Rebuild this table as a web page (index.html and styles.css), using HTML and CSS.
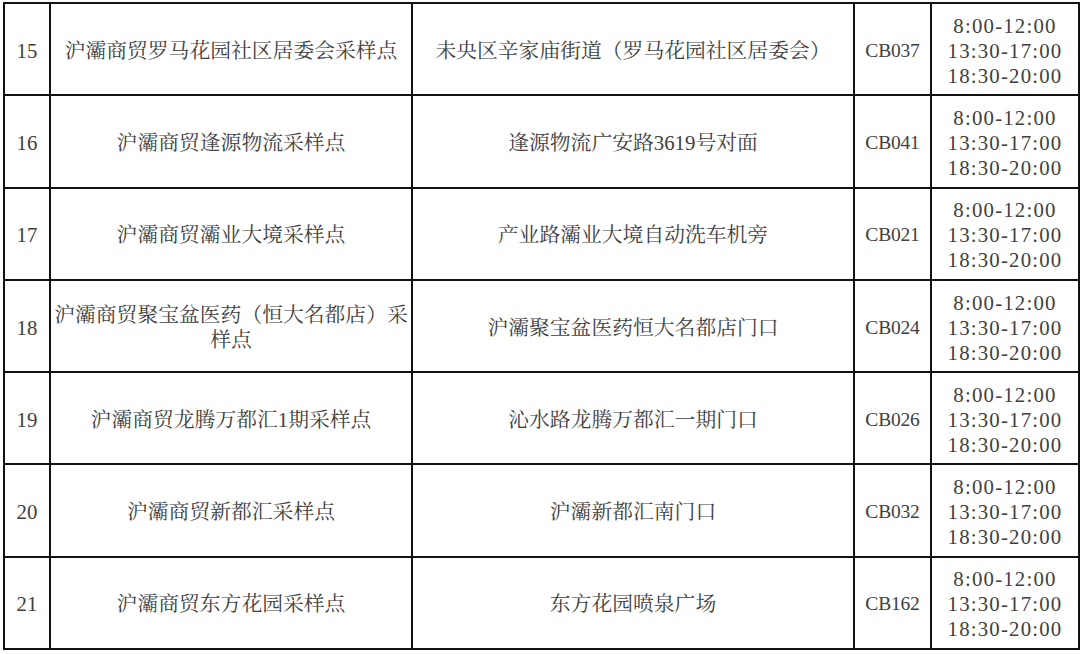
FILE: index.html
```html
<!DOCTYPE html>
<html lang="zh-CN">
<head>
<meta charset="utf-8">
<link rel="stylesheet" href="styles.css">
</head>
<body>
<table class="sites">
  <colgroup>
    <col class="c-no"><col class="c-name"><col class="c-addr"><col class="c-code"><col class="c-time">
  </colgroup>
  <tbody>
    <tr>
      <td class="no">15</td>
      <td class="name">沪灞商贸罗马花园社区居委会采样点</td>
      <td class="addr">未央区辛家庙街道（罗马花园社区居委会）</td>
      <td class="code">CB037</td>
      <td class="time">8:00-12:00<br>13:30-17:00<br>18:30-20:00</td>
    </tr>
    <tr>
      <td class="no">16</td>
      <td class="name">沪灞商贸逢源物流采样点</td>
      <td class="addr">逢源物流广安路3619号对面</td>
      <td class="code">CB041</td>
      <td class="time">8:00-12:00<br>13:30-17:00<br>18:30-20:00</td>
    </tr>
    <tr>
      <td class="no">17</td>
      <td class="name">沪灞商贸灞业大境采样点</td>
      <td class="addr">产业路灞业大境自动洗车机旁</td>
      <td class="code">CB021</td>
      <td class="time">8:00-12:00<br>13:30-17:00<br>18:30-20:00</td>
    </tr>
    <tr>
      <td class="no">18</td>
      <td class="name">沪灞商贸聚宝盆医药（恒大名都店）采样点</td>
      <td class="addr">沪灞聚宝盆医药恒大名都店门口</td>
      <td class="code">CB024</td>
      <td class="time">8:00-12:00<br>13:30-17:00<br>18:30-20:00</td>
    </tr>
    <tr>
      <td class="no">19</td>
      <td class="name">沪灞商贸龙腾万都汇1期采样点</td>
      <td class="addr">沁水路龙腾万都汇一期门口</td>
      <td class="code">CB026</td>
      <td class="time">8:00-12:00<br>13:30-17:00<br>18:30-20:00</td>
    </tr>
    <tr>
      <td class="no">20</td>
      <td class="name">沪灞商贸新都汇采样点</td>
      <td class="addr">沪灞新都汇南门口</td>
      <td class="code">CB032</td>
      <td class="time">8:00-12:00<br>13:30-17:00<br>18:30-20:00</td>
    </tr>
    <tr>
      <td class="no">21</td>
      <td class="name">沪灞商贸东方花园采样点</td>
      <td class="addr">东方花园喷泉广场</td>
      <td class="code">CB162</td>
      <td class="time">8:00-12:00<br>13:30-17:00<br>18:30-20:00</td>
    </tr>
  </tbody>
</table>
</body>
</html>
```

FILE: styles.css
```css
html, body {
  margin: 0;
  padding: 0;
  background: #ffffff;
}

body {
  padding: 2px 0 0 3px;
}

.sites {
  border-collapse: collapse;
  table-layout: fixed;
  width: 1075px;
  font-family: "Liberation Serif", "Noto Serif CJK SC", "Noto Sans CJK SC", serif;
  font-size: 20.8px;
  line-height: 25px;
  color: #404040;
}

.c-no { width: 46px; }
.c-name { width: 362px; }
.c-addr { width: 442px; }
.c-code { width: 77px; }
.c-time { width: 148px; }

.sites tr {
  height: 92.3px;
}

.sites td {
  border: 2px solid #111111;
  padding: 2px 1px 0;
  text-align: center;
  vertical-align: middle;
}

.code {
  font-size: 19.5px;
  letter-spacing: -0.2px;
}

.time {
  letter-spacing: 1.2px;
}
```
